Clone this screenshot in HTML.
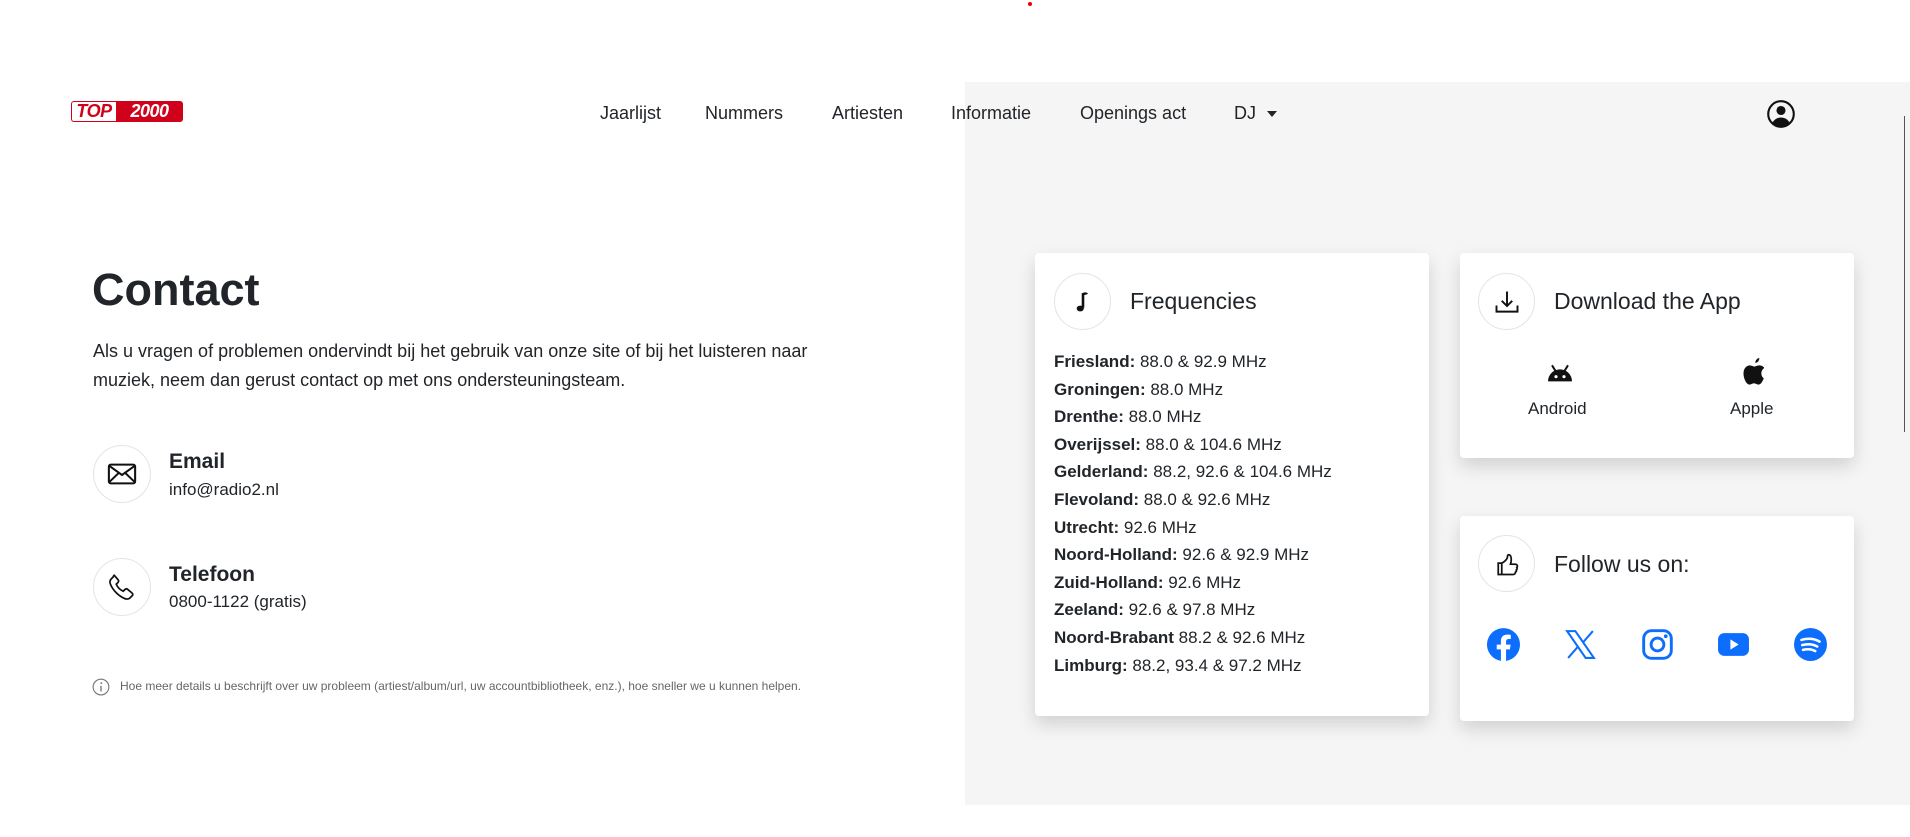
<!DOCTYPE html>
<html><head><meta charset="utf-8"><style>
*{margin:0;padding:0;box-sizing:border-box}
body{width:1910px;height:837px;position:relative;background:#fff;font-family:"Liberation Sans",sans-serif;color:#212529;overflow:hidden}
.a{position:absolute}
.gray{left:965px;top:82px;width:945px;height:723px;background:#f5f5f5}
.nav{top:103px;font-size:18px;color:#212529;white-space:nowrap}
.card{background:#fff;border-radius:4px;box-shadow:0 8px 18px rgba(0,0,0,.15)}
.circ{width:57px;height:57px;border-radius:50%;border:1px solid #e4e4e4;display:flex;align-items:center;justify-content:center;background:#fff}
.ct{font-size:23px}
.freq{font-size:17px;line-height:27.6px}
.freq b{font-weight:700}
.soc{width:33px;height:33px}
.lg{position:absolute;top:0;height:21px;font:italic 900 18px/21px "Liberation Sans",sans-serif;white-space:nowrap;text-align:center;letter-spacing:-0.5px}
</style></head><body>
<div class="a" style="left:1028px;top:2px;width:4px;height:4px;border-radius:50%;background:#e00"></div>
<div class="a gray"></div>
<div class="a" style="left:1904px;top:116px;width:1px;height:316px;background:#555"></div>

<div class="a" style="left:71px;top:101px;width:112px;height:24px">
<div class="lg" style="left:0;width:45px;border:1.5px solid #d0021b;border-right:none;border-radius:3px 0 0 3px;color:#d0021b;background:#fff;line-height:18px">TOP</div>
<div class="lg" style="left:45px;width:67px;background:#d0021b;color:#fff;border-radius:0 3px 3px 0">2000</div>
</div>

<div class="a nav" style="left:600px">Jaarlijst</div>
<div class="a nav" style="left:705px">Nummers</div>
<div class="a nav" style="left:832px">Artiesten</div>
<div class="a nav" style="left:951px">Informatie</div>
<div class="a nav" style="left:1080px">Openings act</div>
<div class="a nav" style="left:1234px">DJ <span style="display:inline-block;margin-left:6px;border-left:5px solid transparent;border-right:5px solid transparent;border-top:6px solid #212529;vertical-align:middle"></span></div>
<svg class="a" style="left:1767px;top:100px" width="28" height="28" viewBox="0 0 16 16"><circle cx="8" cy="8" r="7.3" fill="none" stroke="#111" stroke-width="1.2"/><circle cx="8" cy="6" r="2.6" fill="#111"/><path d="M3 13.2c1-2.2 3-3.2 5-3.2s4 1 5 3.2A7 7 0 0 1 3 13.2z" fill="#111"/></svg>

<div class="a" style="left:92px;top:264px;font-size:45px;font-weight:700">Contact</div>
<div class="a" style="left:93px;top:337px;font-size:18px;line-height:29px;width:755px">Als u vragen of problemen ondervindt bij het gebruik van onze site of bij het luisteren naar muziek, neem dan gerust contact op met ons ondersteuningsteam.</div>

<div class="a circ" style="left:93px;top:445px;width:58px;height:58px"><svg width="30" height="30" viewBox="0 0 16 16"><rect x="1" y="3" width="14" height="10" rx="1" fill="none" stroke="#111" stroke-width="1.1"/><path d="M1 3.5l7 5 7-5M1 12.5l5.2-5M15 12.5l-5.2-5" fill="none" stroke="#111" stroke-width="1.1"/></svg></div>
<div class="a" style="left:169px;top:450px;font-size:21px;font-weight:700">Email</div>
<div class="a" style="left:169px;top:480px;font-size:17px">info@radio2.nl</div>

<div class="a circ" style="left:93px;top:558px;width:58px;height:58px"><svg width="28" height="28" viewBox="0 0 16 16"><path d="M3.6 1.3l2.2 2.6c.4.5.3 1-.1 1.5l-1 1c.8 1.8 2.2 3.2 4 4l1-1c.5-.4 1-.5 1.5-.1l2.6 2.2c.5.4.5 1 0 1.5l-1.2 1.2c-.8.8-2.2.9-3.5.2C6 13 3 10 1.6 6.9c-.7-1.3-.6-2.7.2-3.5L3 2.2c.2-.5.3-1 .6-.9z" fill="none" stroke="#111" stroke-width="1"/></svg></div>
<div class="a" style="left:169px;top:563px;font-size:21px;font-weight:700">Telefoon</div>
<div class="a" style="left:169px;top:592px;font-size:17px">0800-1122 (gratis)</div>

<svg class="a" style="left:92px;top:678px" width="18" height="18" viewBox="0 0 16 16"><circle cx="8" cy="8" r="7" fill="none" stroke="#777" stroke-width="1"/><circle cx="8.3" cy="4.6" r=".8" fill="#777"/><path d="M8 7v5" stroke="#777" stroke-width="1.2"/></svg>
<div class="a" style="left:120px;top:679px;font-size:12px;color:#666">Hoe meer details u beschrijft over uw probleem (artiest/album/url, uw accountbibliotheek, enz.), hoe sneller we u kunnen helpen.</div>

<div class="a card" style="left:1035px;top:253px;width:394px;height:463px"></div>
<div class="a circ" style="left:1054px;top:273px"><svg width="26" height="26" viewBox="0 0 16 16"><path d="M8 2.5v9" stroke="#111" stroke-width="1.6"/><ellipse cx="6.3" cy="12" rx="2.2" ry="1.8" fill="#111"/><path d="M8 2.3c1.5-.5 3-.2 3 .8L8 4z" fill="#111"/></svg></div>
<div class="a ct" style="left:1130px;top:288px">Frequencies</div>
<div class="a freq" style="left:1054px;top:348px">
<div><b>Friesland:</b> 88.0 &amp; 92.9 MHz</div>
<div><b>Groningen:</b> 88.0 MHz</div>
<div><b>Drenthe:</b> 88.0 MHz</div>
<div><b>Overijssel:</b> 88.0 &amp; 104.6 MHz</div>
<div><b>Gelderland:</b> 88.2, 92.6 &amp; 104.6 MHz</div>
<div><b>Flevoland:</b> 88.0 &amp; 92.6 MHz</div>
<div><b>Utrecht:</b> 92.6 MHz</div>
<div><b>Noord-Holland:</b> 92.6 &amp; 92.9 MHz</div>
<div><b>Zuid-Holland:</b> 92.6 MHz</div>
<div><b>Zeeland:</b> 92.6 &amp; 97.8 MHz</div>
<div><b>Noord-Brabant</b> 88.2 &amp; 92.6 MHz</div>
<div><b>Limburg:</b> 88.2, 93.4 &amp; 97.2 MHz</div>
</div>

<div class="a card" style="left:1460px;top:253px;width:394px;height:205px"></div>
<div class="a circ" style="left:1478px;top:273px"><svg width="28" height="28" viewBox="0 0 16 16"><path d="M8 2v8M5 7.3l3 3 3-3M2 10v3.5h12V10" fill="none" stroke="#111" stroke-width="1.1"/></svg></div>
<div class="a ct" style="left:1554px;top:288px">Download the App</div>
<svg class="a" style="left:1544px;top:360px" width="32" height="24" viewBox="0 0 24 16"><path d="M3 15a9 9 0 0 1 18 0z" fill="#111"/><path d="M6 3l2.5 4M18 3l-2.5 4" stroke="#111" stroke-width="1.5"/><circle cx="9" cy="11.5" r="1.2" fill="#fff"/><circle cx="15" cy="11.5" r="1.2" fill="#fff"/></svg>
<div class="a" style="left:1528px;top:399px;font-size:17px">Android</div>
<svg class="a" style="left:1740px;top:356px" width="28" height="32" viewBox="0 0 16 18"><path d="M11 1c.2 1.3-.9 2.8-2.2 2.8C8.6 2.5 9.8 1.1 11 1zM13.6 12.6c-.5 1.3-1.6 3.6-3 3.6-1.1 0-1.4-.7-2.6-.7s-1.6.7-2.6.7C3.8 16.2 2 13 2 9.8 2 6.7 4 5.2 5.6 5.2c1.1 0 2 .7 2.6.7.6 0 1.600-.8 2.900-.7.6 0 2 .2 2.8 1.5-2.4 1.5-2 4.9-.3 5.9z" fill="#111"/></svg>
<div class="a" style="left:1730px;top:399px;font-size:17px">Apple</div>

<div class="a card" style="left:1460px;top:516px;width:394px;height:205px"></div>
<div class="a circ" style="left:1478px;top:535px"><svg width="28" height="28" viewBox="0 0 16 16"><path d="M5 7.5V14h6.5c.8 0 1.3-.6 1.3-1.3.5-.3.7-.8.5-1.3.5-.3.6-1 .3-1.4.5-.4.5-1.3-.2-1.7-.3-.2-.6-.2-3.4-.2.4-1.4.6-2.7.3-4-.2-1-1-1.6-1.7-1.3-.4.2-.3 1-.4 1.7C7.7 5.5 6.3 7 5 7.5zM3 7.5h2V14H3z" fill="none" stroke="#111" stroke-width="1"/></svg></div>
<div class="a ct" style="left:1554px;top:551px">Follow us on:</div>

<svg class="a soc" style="left:1487px;top:628px" viewBox="0 0 16 16"><path fill="#0d6efd" d="M16 8.05A8 8 0 1 0 6.75 15.95v-5.6H4.72V8.05h2.03V6.3c0-2 1.2-3.1 3-3.1.88 0 1.8.16 1.8.16v1.97h-1.01c-1 0-1.3.62-1.3 1.25v1.5h2.22l-.36 2.3H9.24v5.6A8 8 0 0 0 16 8.05z"/></svg>
<svg class="a soc" style="left:1564px;top:628px" viewBox="0 0 16 16"><path fill="none" stroke="#0d6efd" stroke-width="1" d="M1.5 1.5h4l9 13h-4zM14 1.5L9.2 7M2 14.5l4.8-5.5"/></svg>
<svg class="a soc" style="left:1641px;top:628px" viewBox="0 0 16 16"><rect x="1.3" y="1.3" width="13.4" height="13.4" rx="3.8" fill="none" stroke="#0d6efd" stroke-width="1.4"/><circle cx="8" cy="8" r="3.1" fill="none" stroke="#0d6efd" stroke-width="1.4"/><circle cx="12" cy="4" r=".9" fill="#0d6efd"/></svg>
<svg class="a soc" style="left:1717px;top:628px" viewBox="0 0 16 16"><rect x="0.5" y="2.5" width="15" height="11" rx="3" fill="#0d6efd"/><path d="M6.5 5.5v5l4-2.5z" fill="#fff"/></svg>
<svg class="a soc" style="left:1794px;top:628px" viewBox="0 0 16 16"><circle cx="8" cy="8" r="8" fill="#0d6efd"/><path d="M3.6 5.8c3-.9 6.3-.6 8.8.8M4 8.3c2.5-.7 5.2-.5 7.3.7M4.4 10.6c2-.5 4.2-.4 5.9.6" fill="none" stroke="#fff" stroke-width="1.2" stroke-linecap="round"/></svg>
</body></html>
